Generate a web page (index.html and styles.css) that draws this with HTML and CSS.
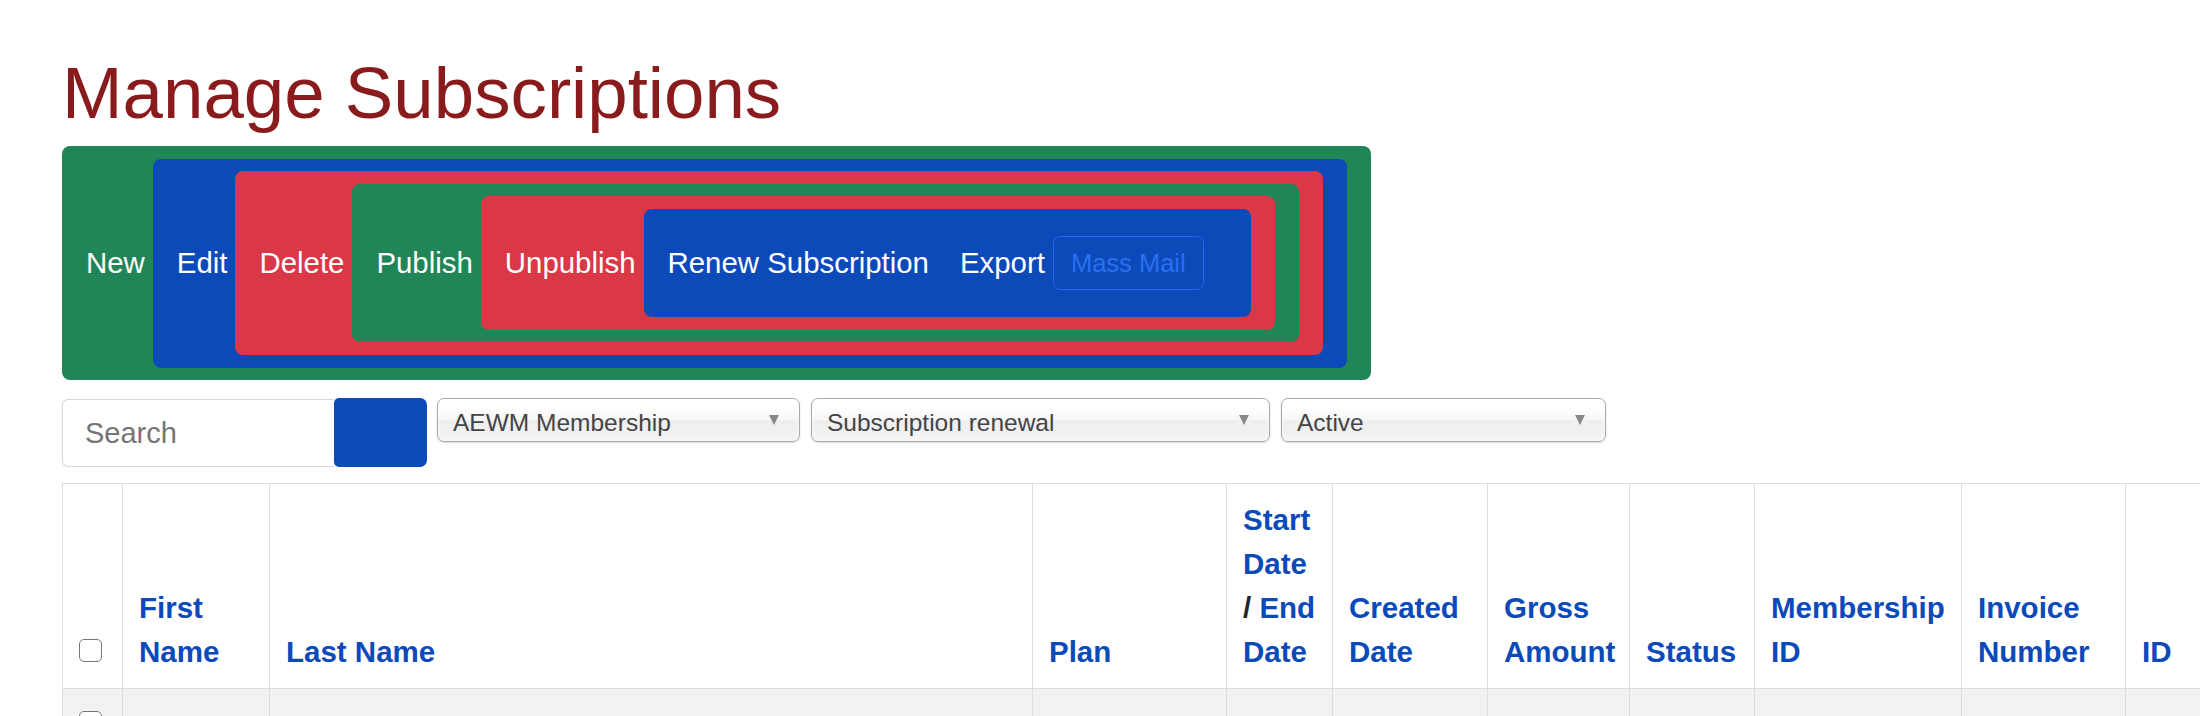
FILE: index.html
```html
<!DOCTYPE html>
<html lang="en">
<head>
    <meta charset="UTF-8">
    <meta name="viewport" content="width=device-width, initial-scale=1.0">
    <title>Manage Subscriptions</title>
    <link rel="stylesheet" href="styles.css">
</head>
<body>

    <main class="page">
        <h1 class="page-title">Manage Subscriptions</h1>

        <!-- Toolbar (buttons nest inside each other) -->
        <div class="toolbar btn btn-green">
            <span>New</span>
            <div class="btn btn-blue">
                <span>Edit</span>
                <div class="btn btn-red">
                    <span>Delete</span>
                    <div class="btn btn-green">
                        <span>Publish</span>
                        <div class="btn btn-red">
                            <span>Unpublish</span>
                            <div class="btn btn-blue btn-inner">
                                <span class="renew">Renew Subscription</span>
                                <span>Export</span>
                                <span class="btn-outline">Mass Mail</span>
                            </div>
                        </div>
                    </div>
                </div>
            </div>
        </div>

        <!-- Filters -->
        <div class="filters">
            <input type="text" class="search-input" placeholder="Search">
            <button class="search-btn" type="button"></button>
            <div class="select select-plan"><span>AEWM Membership</span><i class="caret"></i></div>
            <div class="select select-type"><span>Subscription renewal</span><i class="caret"></i></div>
            <div class="select select-status"><span>Active</span><i class="caret"></i></div>
        </div>

        <table class="subs-table">
            <colgroup>
                <col style="width: 60px">
                <col style="width: 147px">
                <col style="width: 763px">
                <col style="width: 194px">
                <col style="width: 106px">
                <col style="width: 155px">
                <col style="width: 142px">
                <col style="width: 125px">
                <col style="width: 207px">
                <col style="width: 164px">
                <col style="width: 120px">
            </colgroup>
            <thead>
                <tr>
                    <th><input type="checkbox" class="check"></th>
                    <th><a href="#">First Name</a></th>
                    <th><a href="#">Last Name</a></th>
                    <th><a href="#">Plan</a></th>
                    <th><a href="#">Start Date</a><br>/ <a href="#">End Date</a></th>
                    <th><a href="#">Created Date</a></th>
                    <th><a href="#">Gross Amount</a></th>
                    <th><a href="#">Status</a></th>
                    <th><a href="#">Membership ID</a></th>
                    <th><a href="#">Invoice Number</a></th>
                    <th><a href="#">ID</a></th>
                </tr>
            </thead>
            <tbody>
                <tr class="row-odd">
                    <td><input type="checkbox" class="check"></td>
                    <td></td>
                    <td></td>
                    <td></td>
                    <td></td>
                    <td></td>
                    <td></td>
                    <td></td>
                    <td></td>
                    <td></td>
                    <td></td>
                </tr>
            </tbody>
        </table>
    </main>

</body>
</html>
```

FILE: styles.css
```css
html, body {
    margin: 0;
    padding: 0;
    overflow: hidden;
    background: #fff;
    font-family: "Liberation Sans", Arial, sans-serif;
    color: #212529;
}

.page {
    padding: 50px 0 0 62px;
}

.page-title {
    margin: 0 0 10px;
    font-size: 72.7px;
    line-height: 86px;
    font-weight: normal;
    color: #8a1b1d;
}

/* Toolbar */
.toolbar {
    width: fit-content;
}

.btn {
    display: flex;
    align-items: center;
    gap: 8px;
    padding: 12.6px 24px;
    border-radius: 8px;
    color: #fff;
    font-size: 29.4px;
    white-space: nowrap;
}

.btn-green {
    background-color: #218657;
}

.btn-blue {
    background-color: #0c4aba;
}

.btn-red {
    background-color: #da3747;
}

.btn-inner {
    padding-right: 47px;
}

.renew {
    margin-right: 23px;
}

.btn-outline {
    margin: 14.5px 0;
    padding: 11px 17px;
    font-size: 25.5px;
    line-height: 30px;
    color: #2a6ff0;
    border: 1.5px solid #2068f0;
    border-radius: 7px;
}

/* Filters row */
.filters {
    display: flex;
    align-items: flex-start;
    margin-top: 18px;
}

.search-input {
    box-sizing: border-box;
    width: 272px;
    height: 68px;
    margin: 1px 0 0;
    padding: 0 22px;
    border: 1px solid #d8d8d8;
    border-right: none;
    border-radius: 6px 0 0 6px;
    font-family: inherit;
    font-size: 29px;
    color: #333;
    outline: none;
}

.search-input::placeholder {
    color: #757575;
}

.search-btn {
    width: 93px;
    height: 69px;
    margin: 0 10px 0 0;
    padding: 0;
    border: none;
    border-radius: 5px 7px 7px 5px;
    background-color: #0c4aba;
}

.select {
    box-sizing: border-box;
    display: flex;
    justify-content: space-between;
    align-items: center;
    height: 44px;
    margin-right: 11px;
    padding: 5px 20px 0 15px;
    border: 1px solid #aaa;
    border-radius: 7px;
    background: linear-gradient(#fff 20%, #f6f6f6 50%, #eee 52%, #f4f4f4 100%);
    box-shadow: 0 0 3px #fff inset, 0 1px 2px rgba(0, 0, 0, 0.15);
    font-size: 24.5px;
    line-height: 26px;
    color: #444;
}

.select-plan { width: 363px; }
.select-type { width: 459px; }
.select-status { width: 325px; }

.caret {
    width: 0;
    height: 0;
    margin-bottom: 5px;
    border-left: 5px solid transparent;
    border-right: 5px solid transparent;
    border-top: 10px solid #888;
}

/* Table */
.subs-table {
    margin-top: 16px;
    border-collapse: collapse;
    table-layout: fixed;
    width: 2183px;
}

.subs-table th,
.subs-table td {
    border: 1px solid #dadee3;
    padding: 14px 16px;
    text-align: left;
    vertical-align: bottom;
}

.subs-table th {
    font-size: 29.5px;
    line-height: 44px;
    font-weight: bold;
}

.subs-table a {
    color: #0c4aba;
    text-decoration: none;
}

.check {
    appearance: none;
    display: block;
    box-sizing: border-box;
    width: 23px;
    height: 23px;
    margin: 0 0 12px;
    border: 1.5px solid #767676;
    border-radius: 5px;
    background: #fff;
}

.row-odd td {
    background-color: #f2f2f2;
    vertical-align: top;
    padding-top: 22px;
    height: 60px;
}

.row-odd .check {
    margin: 0;
}
```
